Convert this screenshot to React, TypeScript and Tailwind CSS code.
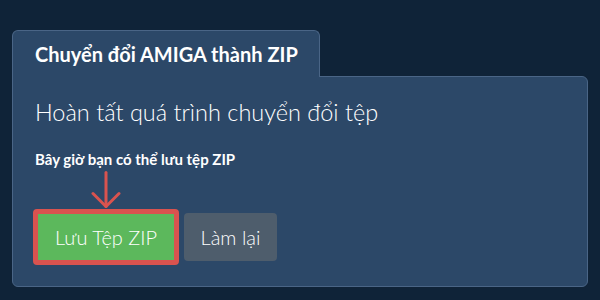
export default function App() {
  return (
    <div className="w-[600px] h-[300px] bg-[#0f2338] pt-[30px] px-3 font-['Lato','Liberation_Sans',sans-serif] text-white">
      {/* Tab */}
      <div className="relative z-10 -mb-px w-[308px] h-[47px] bg-[#2c4868] border border-b-0 border-[#4a6586] rounded-t-md pl-[22px] pt-[11px]">
        <h2 className="text-[20px] font-bold leading-[24px]">Chuyển đổi AMIGA thành ZIP</h2>
      </div>

      {/* Panel */}
      <div className="h-[211px] bg-[#2c4868] border border-[#4a6586] rounded-b-md rounded-tr-md px-[22px] pt-[21px]">
        <h1 className="font-['Lato_Light','Lato',sans-serif] text-[23.5px] font-light leading-[28px]">Hoàn tất quá trình chuyển đổi tệp</h1>
        <p className="mt-[24px] text-[15px] font-bold leading-[18px]">Bây giờ bạn có thể lưu tệp ZIP</p>

        <svg className="ml-[56px] mt-[3px] block" width="30" height="38" viewBox="0 0 30 38" fill="none" stroke="#d9534f" strokeWidth="3" strokeLinecap="round" strokeLinejoin="round">
          <path d="M15 1.5V35.5" />
          <path d="M2 22.5L15 35.5L28 22.5" />
        </svg>

        <div className="flex items-center gap-[5px] -ml-[2px]">
          <div className="border-[5px] border-[#d9534f] rounded-[4px]">
            <button className="h-[46px] w-[136px] bg-[#5cb85c] font-['Lato_Light','Lato',sans-serif] font-light text-[20px] leading-none">Lưu Tệp ZIP</button>
          </div>
          <button className="h-[48px] w-[93px] bg-[#4e5d6c] rounded-[4px] font-['Lato_Light','Lato',sans-serif] font-light text-[20px] leading-none">Làm lại</button>
        </div>
      </div>
    </div>
  );
}
